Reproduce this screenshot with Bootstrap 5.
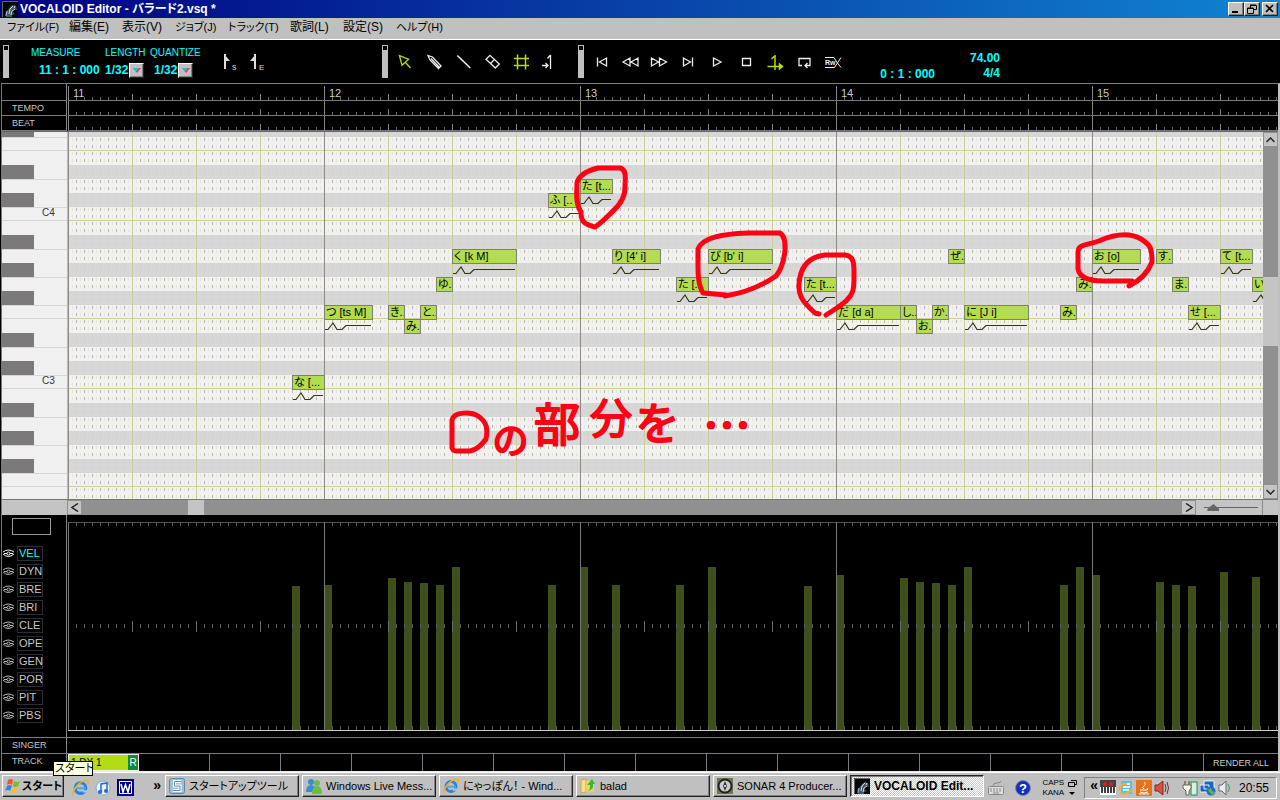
<!DOCTYPE html>
<html lang="ja">
<head>
<meta charset="utf-8">
<meta name="viewport" content="width=device-width, initial-scale=1">
<title>VOCALOID Editor - バラード2.vsq *</title>
<link href="https://cdn.jsdelivr.net/npm/bootstrap@5.3.0/dist/css/bootstrap.min.css" rel="stylesheet">
<style>
:root{--face:#c0c0c0;--cyan:#00ffff;--lime:#b4dc14;--rule:#777a80}
body{font-family:"Liberation Sans","Noto Sans CJK JP",sans-serif;font-size:12px;line-height:14px;background:#000;color:#000;font-feature-settings:"palt"}
button{font:inherit;color:inherit;border:0;background:none;padding:0;border-radius:0}
svg{display:block;flex:none}
.titlebar{height:18px;background:linear-gradient(90deg,#000080,#1084d0);color:#fff;font-weight:700;padding:0 2px;gap:2px}
.raised{background:var(--face);border:1px solid;border-color:#fff #222 #222 #fff;box-shadow:inset -1px -1px #808080}
.capbtn{width:16px;height:14px;display:flex;align-items:center;justify-content:center}
.capbtn.shut{margin-left:2px}
.menus{height:22px;background:var(--face);border-bottom:1px solid #fff;padding-left:7px}
.menus a{color:#000;text-decoration:none;line-height:18px;width:53px;flex:none}
.menus a.kana{font-size:11px}
.menus a.wide{width:62px}
.tools{height:43px;color:var(--cyan);padding-left:3px}
.grip{width:6px;height:33px;background:var(--face);flex:none;padding:1px}
.grip::before{content:"";display:block;width:4px;height:4px;background:#000}
.field-m{margin-left:22px;width:74px}
.field-l{width:45px}
.field-q{width:61px}
.flags{width:171px}
.toolset{padding:0 13px 0 3px}
.clock{padding-top:24px;width:74px}
.tempo{padding-top:9px;width:65px;line-height:15px}
.tool{width:29px;height:29px;color:#eee;flex:none}
.tool.lit{color:var(--lime)}
.tool svg,.flagbtn svg{fill:none;stroke:currentColor;stroke-width:1.3}
.flagbtn{width:28px;color:#ddd}
.tlabel{font-size:10px;line-height:16px}
.tval{font-weight:700;line-height:18px;height:18px}
.picker-box{position:relative;width:39px}
.picker{appearance:none;border:0;background:#000;color:var(--cyan);font-weight:700;font-size:12px;line-height:18px;padding:0;width:38px;height:18px;display:block}
.picker-mark{position:absolute;right:0;top:2px;width:15px;height:15px;pointer-events:none;display:flex;align-items:center;justify-content:center}
.work{margin-left:1px;border-left:1px solid #777;border-right:2px solid var(--face);border-top:1px solid #808080}
.side{width:65px;flex:none;border-right:1px solid #888;margin-right:1px;color:#c8c8c8;font-size:9px}
.side .cell{height:15px;line-height:14px;padding-left:10px;border-bottom:1px solid var(--rule)}
.side .cell.top{height:17px}
.canvas{flex:1 1 0;min-width:0;position:relative;overflow:hidden}
.canvas svg.fill-all{position:absolute;left:0;top:0;width:100%;height:100%}
.canvas svg.ink{z-index:2;pointer-events:none}
.roll{min-height:367px;background:#efefef;border-top:1px solid #666}
.roll .side{margin:0;width:66px;border-right:1px solid #bbb;position:relative}
.tone{position:absolute;height:15px;border:1px solid #7d806a;background:#b4dc50;line-height:13px;padding-left:1px;white-space:pre;overflow:hidden;font-size:11px}
.pitch{position:absolute;width:100%;height:30px;overflow:visible;pointer-events:none}
.sb{background:#909090;flex:none}
.sb button{background:#c4c4c4;border:1px solid #909090;width:15px;height:15px;display:flex;align-items:center;justify-content:center;flex:none}
.vbar{width:15px}
.vbar .gone{height:130px}.vbar .thumb{height:69px}
.hbar .gone{width:106px}.hbar .thumb{width:16px}
.thumb{background:#c4c4c4;flex:none}
.hbar{height:16px;background:#c4c4c4;border-top:1px solid #777;padding-left:65px}
.hbar .corner{width:16px;border-left:1px solid #888}
.zoomer{appearance:none;width:54px;height:15px;margin:0 4px 0 8px;background:linear-gradient(#666,#666) 0 7px/100% 1px no-repeat}
.zoomer::-webkit-slider-thumb{appearance:none;width:12px;height:7px;background:#666;clip-path:polygon(50% 0,100% 70%,100% 100%,0 100%,0 70%)}
.lane{height:223px;border-bottom:1px solid var(--rule)}
.parm{height:18px;gap:3px;font-size:11px;padding-left:1px}
.parm button{width:26px;height:15px;border:1px solid #2c2c34;text-align:left;line-height:13px;padding-left:1px}
.parm svg{color:#bbb;fill:none;stroke:currentColor}
.parm.on svg{color:#fff}.parm.on button{color:var(--cyan)}
.meter{width:39px;height:17px;border:1px solid #999;margin:3px 0 9px 10px}
.strip{height:16px;border-bottom:1px solid var(--rule)}
.tracks{height:17px;flex-wrap:nowrap}
.side .flat{line-height:15px;padding-left:10px}
.slot{flex:0 0 71px;border-right:1px solid var(--rule)}
.slot.used{background:var(--lime);border:1px solid #eee;color:#000;font-size:10px;line-height:15px;display:flex;justify-content:space-between;padding-left:2px}
.slot.used b{background:#128a3a;color:#fff;width:10px;text-align:center;font-weight:400}
.render{font-size:9px;color:#ccc;flex:1 0 0}
.taskbar{height:29px;background:var(--face);border-top:1px solid #e8e8e8;box-shadow:inset 0 1px #fff;padding:3px 3px 0 2px;position:relative}
.quick{width:101px;padding-left:8px;gap:6px;flex:none}
.chev{font-weight:700;font-size:14px;padding-bottom:6px}
.tasks{gap:3px;flex:0 1 819px;min-width:0}
.task{height:22px;flex:1 1 0;min-width:0;font-size:11px;padding:0 2px 0 3px;display:flex;align-items:center;gap:4px;white-space:nowrap;overflow:hidden}
.task.now{border-color:#222 #fff #fff #222;box-shadow:inset 1px 1px #808080;background:repeating-conic-gradient(#fff 0 25%,#c8c8c8 0 50%) 0 0/2px 2px;font-weight:700;font-size:12px}
.start{width:62px;height:22px;font-weight:700;font-size:11px;display:flex;align-items:center;gap:1px;padding-left:1px;white-space:nowrap;flex:none}
.status{gap:11px}
.tray{border:1px solid;border-color:#808080 #fff #fff #808080;height:22px;padding:0 7px 0 5px;gap:2px}
.power{margin-left:10px}
.tray time{margin-left:5px;font-size:12px}
.tip{position:absolute;left:53px;top:-11px;background:#ffffe1;border:1px solid #000;font-size:11px;line-height:13px;padding:0 1px;height:15px;z-index:3;width:40px;white-space:nowrap}
.ime{font-size:8px;line-height:10px;gap:4px;margin-right:-4px}
</style>
</head>
<body class="d-flex flex-column min-vh-100">
<svg width="0" height="0" class="position-absolute" aria-hidden="true">
 <defs>
  <symbol id="face" viewBox="0 0 16 16"><path fill="#050808" d="M0 0h16v16H0z"/><path fill="none" stroke="#666" d="M.5 16V.5H16"/><path d="M4 16l1-6 3-4 3-2 3 1 1 4-3-1-2 3 3 2-3 1v2z" fill="#456"/><path d="M7 13l1-5 3-3M9 14l1-4 3-2M4 15l1-5M12 7l1-2" stroke="#cde" fill="none"/><path d="M3 15l1-4 1 4" fill="#678"/></symbol>
  <symbol id="ie" viewBox="0 0 16 16"><circle cx="8" cy="8.5" r="5" fill="none" stroke="#2a84dc" stroke-width="3"/><path d="M4 8.700h9" stroke="#49a6f0" stroke-width="2"/><path d="M10 10.500h5v2.200h-5z" fill="#c0c0c0"/><path d="M1.500 15C-1 12 7 2 13 1.200c3-.3 2.500 2 1.500 4" fill="none" stroke="#f2b418" stroke-width="1.500"/></symbol>
 </defs>
</svg>

<header class="titlebar d-flex align-items-center">
 <svg width="16" height="16"><use href="#face"/></svg>
 <span class="flex-grow-1 text-nowrap">VOCALOID Editor - バラード2.vsq *</span>
 <div class="d-flex">
  <button class="raised capbtn" aria-label="最小化"><svg width="10" height="10"><path d="M1 8h6" stroke="#000" stroke-width="2"/></svg></button>
  <button class="raised capbtn" aria-label="元に戻す"><svg width="10" height="10" fill="none" stroke="#000"><path d="M3 1h6M3 1.500h6.500v4H7M3.500 1v3M.5 4v5.500h6V4zM0 4.500h7"/></svg></button>
  <button class="raised capbtn shut" aria-label="閉じる"><svg width="10" height="10"><path d="M1 1l7 7M8 1l-7 7" stroke="#000" stroke-width="1.700"/></svg></button>
 </div>
</header>

<nav class="menus d-flex text-nowrap">
 <a href="#" class="kana wide">ファイル(F)</a><a href="#">編集(E)</a><a href="#">表示(V)</a><a href="#" class="kana">ジョブ(J)</a><a href="#" class="kana wide">トラック(T)</a><a href="#">歌詞(L)</a><a href="#">設定(S)</a><a href="#" class="kana">ヘルプ(H)</a>
</nav>

<section class="tools d-flex align-items-center text-nowrap" aria-label="ツールバー">
 <div class="grip"></div>
 <div class="field-m"><div class="tlabel">MEASURE</div><div class="tval ps-2">11 : 1 : 000</div></div>
 <div class="field-l"><label class="tlabel d-block" for="len">LENGTH</label><div class="picker-box"><select id="len" class="picker"><option>1/32</option></select><span class="raised picker-mark"><svg width="8" height="5"><path d="M0 0h8L4 5z" fill="#f33"/><path d="M0 0h6L3 4z" fill="#2bd"/></svg></span></div></div>
 <div class="field-q"><label class="tlabel d-block" for="qua">QUANTIZE</label><div class="picker-box ms-1"><select id="qua" class="picker"><option>1/32</option></select><span class="raised picker-mark"><svg width="8" height="5"><path d="M0 0h8L4 5z" fill="#f33"/><path d="M0 0h6L3 4z" fill="#2bd"/></svg></span></div></div>
 <div class="flags d-flex ps-1">
  <button class="flagbtn" aria-label="開始マーカー"><svg width="28" height="29"><path d="M10 7v15" stroke-width="2"/><path d="M9 7l6 7H9z" fill="currentColor" stroke="none"/><text x="17" y="23" font-size="9" fill="currentColor" stroke="none">s</text></svg></button>
  <button class="flagbtn" aria-label="終了マーカー"><svg width="28" height="29"><path d="M12 7v15" stroke-width="2"/><path d="M13 7l-6 7h6z" fill="currentColor" stroke="none"/><text x="16" y="23" font-size="8" fill="currentColor" stroke="none">E</text></svg></button>
 </div>
 <div class="grip"></div>
 <div class="toolset d-flex">
  <button class="tool lit" aria-label="矢印"><svg width="29" height="29"><path d="M8.500 8.700l9 3.500-6.500 6zM14 15l5.500 6"/></svg></button>
  <button class="tool" aria-label="鉛筆"><svg width="29" height="29"><path d="M8 8.500l4.500 1.500 8.500 9-2.500 2.500L10 13zM11 11.500l8 8.500"/></svg></button>
  <button class="tool" aria-label="直線"><svg width="29" height="29"><path stroke-width="1.600" d="M8.300 8.500l13 12.500"/></svg></button>
  <button class="tool" aria-label="消しゴム"><svg width="29" height="29"><path d="M8 12.300l4-4 9.300 8.700-4 4zM12.500 16.500l4-4"/></svg></button>
  <button class="tool lit" aria-label="グリッド"><svg width="29" height="29"><path stroke-width="1.500" d="M10.500 7.500v15M18.500 7.500v15M7 11.500h15M7 18.500h15"/></svg></button>
  <button class="tool" aria-label="終端"><svg width="29" height="29"><path d="M14.500 8v14M14.500 8l-3 3.500M6 18.500h6M9.500 16l2.500 2.500-2.500 2.500"/></svg></button>
 </div>
 <div class="grip"></div>
 <div class="toolset d-flex">
  <button class="tool" aria-label="先頭へ"><svg width="29" height="29"><path d="M10.500 10.500v9M19.500 11v8l-7-4z"/></svg></button>
  <button class="tool" aria-label="巻き戻し"><svg width="29" height="29"><path d="M14 11v8l-7-4zM22 11v8l-7-4z"/></svg></button>
  <button class="tool" aria-label="早送り"><svg width="29" height="29"><path d="M6.500 11v8l7-4zM14.500 11v8l7-4z"/></svg></button>
  <button class="tool" aria-label="末尾へ"><svg width="29" height="29"><path d="M9.500 11v8l7-4zM18.500 10.500v9"/></svg></button>
  <button class="tool" aria-label="再生"><svg width="29" height="29"><path d="M10.500 11v8l7.500-4z"/></svg></button>
  <button class="tool" aria-label="停止"><svg width="29" height="29"><path d="M10.500 11.500h8v7h-8z"/></svg></button>
  <button class="tool lit" aria-label="開始位置"><svg width="29" height="29"><path stroke-width="1.500" d="M14 8v15M14 8.500L10.500 12M6.500 19.500h14M18.500 17l3 2.500-3 2.500z"/></svg></button>
  <button class="tool" aria-label="ループ"><svg width="29" height="29"><path d="M12 18.500H9v-7h11v7h-5M17.500 16L15 18.500l2.500 2.500"/></svg></button>
  <button class="tool" aria-label="RwX"><svg width="29" height="29"><path stroke-width="1" d="M6 10.500h9l3 5 4 5M22 10.500l-6.500 10H6"/><text x="6" y="18" font-size="7" font-weight="700" fill="currentColor" stroke="none">Rw</text></svg></button>
 </div>
 <div class="clock text-end fw-bold">0 : 1 : 000</div>
 <div class="tempo text-end fw-bold">74.00<br>4/4</div>
</section>

<main class="work d-flex flex-column flex-grow-1">
 <div class="d-flex">
  <div class="side"><div class="cell top"></div><div class="cell">TEMPO</div><div class="cell">BEAT</div></div>
  <div class="canvas">
   <svg class="fill-all">
    <defs>
     <pattern id="t8" width="8" height="4" patternUnits="userSpaceOnUse"><path d="M.5 0v4" stroke="#666"/></pattern>
     <pattern id="t64" width="64" height="60" patternUnits="userSpaceOnUse"><path d="M.5 10v6M.5 25v6M.5 40v6" stroke="#888"/></pattern>
     <pattern id="t256" width="256" height="60" patternUnits="userSpaceOnUse"><path d="M.5 2v46" stroke="#888"/></pattern>
    </defs>
    <rect y="13" width="100%" height="3" fill="url(#t8)"/><rect y="28" width="100%" height="3" fill="url(#t8)"/><rect y="43" width="100%" height="3" fill="url(#t8)"/>
    <rect width="100%" height="47" fill="url(#t64)"/><rect width="100%" height="47" fill="url(#t256)"/>
    <path d="M0 16.500h4000M0 31.500h4000M0 46.500h4000" stroke="#777a80"/>
    <g fill="#ccc" font-size="11"><text x="5" y="13">11</text><text x="261" y="13">12</text><text x="517" y="13">13</text><text x="773" y="13">14</text><text x="1029" y="13">15</text></g>
   </svg>
  </div>
 </div>

 <div class="roll d-flex flex-grow-1">
  <div class="side">
   <svg width="65" height="100%" class="position-absolute">
    <defs><pattern id="keys" y="75" width="65" height="168" patternUnits="userSpaceOnUse">
     <rect width="65" height="168" fill="#f0f0f1"/>
     <path d="M0 .5h65M0 13.500h65M0 42.500h65M0 70.500h65M0 98.500h65M0 111.500h65M0 140.500h65" stroke="#d6d6d6"/>
     <path d="M0 28h32v14H0zM0 56h32v14H0zM0 84h32v14H0zM0 126h32v14H0zM0 154h32v14H0z" fill="#7b797a"/></pattern></defs>
    <rect width="65" height="100%" fill="url(#keys)"/>
    <g fill="#334" font-size="10"><text x="40" y="84">C4</text><text x="40" y="252">C3</text></g>
   </svg>
  </div>
  <div class="canvas" id="notes">
   <svg class="fill-all">
    <defs>
     <pattern id="dash" y="5" width="8" height="7" patternUnits="userSpaceOnUse"><path d="M.5 1v3" stroke="#b9b9a4"/><path d="M4.500 1v3" stroke="#e6e6de"/></pattern>
     <pattern id="rows" y="75" width="8" height="168" patternUnits="userSpaceOnUse">
      <path d="M0 28h8v14H0zM0 56h8v14H0zM0 84h8v14H0zM0 126h8v14H0zM0 154h8v14H0z" fill="#d2d2d2" fill-opacity=".86"/>
      <path d="M0 13.500h8M0 111.500h8" stroke="#cfcf9c"/></pattern>
     <pattern id="beat" width="64" height="64" patternUnits="userSpaceOnUse"><path d="M.5 0v64" stroke="#cccc98"/></pattern>
     <pattern id="bar" width="256" height="64" patternUnits="userSpaceOnUse"><path d="M.5 0v64" stroke="#8f8980"/></pattern>
    </defs>
    <rect width="100%" height="100%" fill="#f1f1f1"/><rect width="100%" height="100%" fill="url(#dash)"/><rect width="100%" height="100%" fill="url(#rows)"/><rect width="100%" height="100%" fill="url(#beat)"/><rect width="100%" height="100%" fill="url(#bar)"/>
   </svg>
   <svg class="fill-all ink" id="ink" fill="none" stroke="#ff0014" stroke-width="5" stroke-linecap="round" stroke-linejoin="round">
    <path d="M513 80C507 72 509 58 509 51C511 42 522 38 530 36H552C557 37 558 42 557 53C558 65 552 73 544 80C538 86 531 93 527 95C520 93 513 92 513 81"/>
    <path d="M658 163L635 161C629 151 630 137 630 117C635 105 655 102 680 101H712C717 104 717 111 717 118C716 129 713 138 708 144C695 153 676 161 657 164"/>
    <path d="M751 182L747 181C737 172 730 165 731 152C732 137 739 125 757 123H777C787 124 786 134 786 145C786 158 785 162 779 168C773 174 764 179 758 183"/>
    <path d="M1061 154C1069 150 1079 143 1084 130C1084 117 1083 113 1073 107C1061 100 1045 103 1031 109C1020 113 1010 112 1010 120V137C1012 147 1025 149 1035 149H1064"/>
    <path d="M384 316V288C386 279 404 280 410 284C419 290 420 297 418 307C413 314 408 318 402 319H389C385 319 384 318 384 314"/>
    <g fill="#ff0014" stroke-width="2" font-family="Noto Sans CJK JP, sans-serif" font-weight="400"><text x="425" y="322" font-size="36">の</text><text x="466" y="309" font-size="46">部</text><text x="522" y="302" font-size="42">分</text><text x="568" y="308" font-size="44">を</text><text x="635" y="311" font-size="48">…</text></g>
   </svg>
  </div>
  <div class="sb vbar d-flex flex-column">
   <button aria-label="上へ"><svg width="9" height="6"><path d="M.5 5l4-4 4 4" fill="none" stroke="#222" stroke-width="1.500"/></svg></button>
   <div class="gone"></div><div class="thumb"></div>
   <button class="mt-auto" aria-label="下へ"><svg width="9" height="6"><path d="M.5 1l4 4 4-4" fill="none" stroke="#222" stroke-width="1.500"/></svg></button>
  </div>
 </div>

 <div class="hbar d-flex">
  <div class="sb d-flex flex-grow-1 overflow-hidden">
   <button aria-label="左へ"><svg width="8" height="9"><path d="M7 .5l-6 4 6 4" fill="none" stroke="#222" stroke-width="1.500"/></svg></button>
   <div class="gone"></div><div class="thumb"></div>
   <button class="ms-auto" aria-label="右へ"><svg width="8" height="9"><path d="M1 .5l6 4-6 4" fill="none" stroke="#222" stroke-width="1.500"/></svg></button>
  </div>
  <input type="range" class="zoomer" min="0" max="100" value="8" aria-label="ズーム">
  <div class="corner"></div>
 </div>

 <div class="lane d-flex">
  <div class="side"><div class="meter"></div><div id="parms"></div></div>
  <div class="canvas"><svg class="fill-all">
   <defs>
    <pattern id="v8" width="8" height="4" patternUnits="userSpaceOnUse"><path d="M.5 0v4" stroke="#5c5c5c"/></pattern>
    <pattern id="v64" y="106" width="64" height="11" patternUnits="userSpaceOnUse"><path d="M.5 0v11" stroke="#6c6c6c"/></pattern>
    <pattern id="v256" width="256" height="64" patternUnits="userSpaceOnUse"><path d="M.5 0v64" stroke="#777"/></pattern>
   </defs>
   <g id="bars" fill="#3f4f1c"></g>
   <path d="M0 7.500h4000" stroke="#555"/>
   <rect y="8" width="100%" height="3" fill="url(#v8)"/><rect y="109" width="100%" height="4" fill="url(#v8)"/><rect y="211" width="100%" height="4" fill="url(#v8)"/><rect y="106" width="100%" height="11" fill="url(#v64)"/><rect y="7" width="100%" height="208" fill="url(#v256)"/>
   <path d="M0 215.500h4000" stroke="#ccc"/>
  </svg></div>
 </div>
 <div class="strip d-flex"><div class="side"><div class="flat">SINGER</div></div></div>
 <div class="tracks d-flex overflow-hidden" id="tracks"><div class="side"><div class="flat">TRACK</div></div>
  <div class="slot used"><span>1 DX 1</span><b>R</b></div>
 </div>
</main>

<footer class="taskbar d-flex">
 <div class="tip" role="tooltip">スタート</div>
 <button class="raised start"><svg width="17" height="16"><path d="M4 2q3-2 5 0L8 7Q5 5 3 7z" fill="#e8582c"/><path d="M10 3q3 2 6 0l-2 5q-3 2-5 0z" fill="#7cb82f"/><path d="M3 8q3-2 5 0l-2 5Q4 11 1 13z" fill="#3a82e0"/><path d="M9 9q2 2 5 0l-2 5q-3 2-5 0z" fill="#f8c020"/></svg>スタート</button>
 <div class="quick d-flex align-items-center">
  <svg width="17" height="17"><use href="#ie"/></svg>
  <svg width="16" height="16"><circle cx="8" cy="8" r="7" fill="#e8f2fa" stroke="#8ac"/><path d="M2 11a7 7 0 005 4l1-6z" fill="#b8e0a0"/><path d="M6 12V4l6-1v8" fill="none" stroke="#2a6ad0" stroke-width="1.500"/><circle cx="5" cy="12" r="2" fill="#2a6ad0"/><circle cx="11" cy="11" r="2" fill="#2a6ad0"/></svg>
  <svg width="17" height="17"><path d="M0 0h17v17H0z" fill="#00008b"/><path d="M2.500 2.500h12v12h-12z" fill="none" stroke="#fff"/><path d="M4 5l2 8 2.500-7L11 13l2-8" fill="none" stroke="#fff" stroke-width="1.600"/></svg>
  <span class="chev ms-auto pe-1">»</span>
 </div>
 <div class="tasks d-flex">
  <button class="raised task"><svg width="16" height="16"><rect x=".5" y=".5" width="15" height="15" rx="2" fill="#9fc0dc" stroke="#5686ac"/><path d="M12 3.500H5.500V8H11v4.500H4" fill="none" stroke="#fff" stroke-width="3"/><path d="M12 3.500H5.500V8H11v4.500H4" fill="none" stroke="#5e8cb0"/></svg>スタートアップツール</button>
  <button class="raised task"><svg width="16" height="16"><circle cx="5" cy="4" r="3" fill="#3a8ed0"/><path d="M0 14q0-7 5-7t5 7z" fill="#3a8ed0"/><circle cx="11" cy="5" r="3" fill="#6cbb4c"/><path d="M6 16q0-8 5-8t5 8z" fill="#6cbb4c"/></svg>Windows Live Mess...</button>
  <button class="raised task"><svg width="16" height="16"><use href="#ie"/></svg>にゃっぽん！ - Wind...</button>
  <button class="raised task"><svg width="16" height="16"><path d="M1 2l5-1v13l-5 1z" fill="#f8e088" stroke="#c8a840"/><path d="M6 3h8v11H6z" fill="#f0d060"/><path d="M7 13q4-1 3-6H7l5-6 3 5h-2q1 6-6 7" fill="#38b838"/></svg>balad</button>
  <button class="raised task"><svg width="16" height="16"><path d="M0 0h16v16H0z" fill="#6c7850"/><circle cx="8" cy="8" r="6.500" fill="#ccc" stroke="#222" stroke-width="2"/><path d="M8 3l2 5-2 5-2-5z" fill="#333"/><circle cx="8" cy="8" r="1" fill="#fff"/></svg>SONAR 4 Producer...</button>
  <button class="raised task now"><svg width="16" height="16"><use href="#face"/></svg>VOCALOID Edit...</button>
 </div>
 <div class="status d-flex align-items-center ms-auto text-nowrap">
  <svg width="16" height="15" fill="none" stroke="#888"><rect x=".5" y="6.500" width="15" height="8" rx="1" fill="#ddd"/><path d="M2 9h12M2 11h12" stroke-dasharray="2 1"/><path d="M5 13h6M5 6q0-3 4-3t4-2"/></svg>
  <svg width="16" height="16"><circle cx="8" cy="8" r="7.500" fill="#1530c0" stroke="#889"/><text x="4" y="13" font-size="13" font-weight="700" fill="#fff">?</text></svg>
  <div class="ime d-flex"><div>CAPS<br>KANA</div><svg width="9" height="20" fill="none" stroke="#000"><path d="M3 2.500h5.500v4H7M.5 4.500h6v4h-6z"/><path d="M1 14h6l-3 3z" fill="#000" stroke="none"/></svg></div>
  <div class="tray d-flex align-items-center"><span class="chev">«</span>
   <svg width="16" height="16"><path d="M0 0h16v7H0z" fill="#444"/><circle cx="5" cy="4" r="2" fill="#e02020"/><circle cx="11" cy="4" r="2" fill="#e02020"/><path d="M0 7h16v8H0z" fill="#fff"/><path d="M2 7v6M5 7v6M8 7v6M11 7v6M14 7v6" stroke="#000" stroke-width="1.500"/></svg>
   <svg width="16" height="16"><rect x="3" y="1" width="11" height="13" fill="#5cc0e0"/><path d="M5 4h7M5 7h7M5 10h6" stroke="#fff" stroke-width="1.500"/><path d="M1 10q1-7 8-6M2 13q7 3 12-4" fill="none" stroke="#f0b040" stroke-width="2"/></svg>
   <svg width="16" height="16"><rect width="16" height="16" rx="1" fill="#e87018"/><path d="M8 2q3 2 0 4t0 3M4 10h7q2-2 0-1M4 12q4 2 8 0M3 14h10" fill="none" stroke="#fff"/></svg>
   <svg width="16" height="16"><path d="M1 5h3l5-4v14l-5-4H1z" fill="#d85040" stroke="#822"/><path d="M11 4q2 4 0 8M13 2q3 6 0 12" fill="none" stroke="#633"/></svg>
   <svg width="16" height="16" class="power"><rect x="9" y="2" width="6" height="13" fill="#d8f0e0" stroke="#286"/><path d="M1 5h8v3l-2 3v4H4v-4L1 8z" fill="#fff" stroke="#664"/><path d="M3 5V1M7 5V1" stroke="#864" stroke-width="1.500"/></svg>
   <svg width="16" height="16"><path d="M4 1h10v8H4zM0 5h9v7H0z" fill="#1868b8" stroke="#eef"/><circle cx="11" cy="11" r="4.500" fill="#2864d8"/><path d="M8 10l3-2 1 3 3 1-2 3-3-2z" fill="#50c040"/></svg>
   <svg width="14" height="16"><path d="M1 5h3l4-4v14l-4-4H1z" fill="#e8eef0" stroke="#667"/><path d="M10 4q3 4 0 8" fill="none" stroke="#2a6"/></svg>
   <time>20:55</time>
  </div>
 </div>
</footer>

<script src="https://cdn.jsdelivr.net/npm/bootstrap@5.3.0/dist/js/bootstrap.bundle.min.js"></script>
<script>
// start (1/32 steps from measure 11), row below the top D, length in steps, lyric
const song = [
 [28,14,4,'な [...'],[32,9,6,'つ [ts M]'],[40,9,2,'き..'],[42,10,2,'み.'],[44,9,2,'と..'],[46,7,2,'ゆ.'],[48,5,8,'く [k M]'],
 [60,1,4,'ふ [..'],[64,0,4,'た [t...'],[68,5,6,"り [4' i]"],[76,7,4,'た [...'],[80,5,8,"び [b' i]"],[92,7,4,'た [t...'],
 [96,9,8,'だ [d a]'],[104,9,2,'し..'],[106,10,2,'お.'],[108,9,2,'か.'],[110,5,2,'ぜ.'],[112,9,8,'に [J i]'],[124,9,2,'み.'],
 [126,7,2,'み.'],[128,5,6,'お [o]'],[136,5,2,'す.'],[138,7,2,'ま.'],[140,9,4,'せ [...'],[144,5,4,'て [t...'],[148,7,4,'い']
];
const velocity = [144,145,152,148,147,145,163,145,163,145,145,163,144,155,152,148,147,145,163,145,163,155,148,145,144,158,153];
const ink = document.getElementById('ink');
let bars = '';
song.forEach(([start, row, len, lyric], i) => {
  const x = start * 8, y = 47 + row * 14, w = len * 8;
  if (len > 2) {
    ink.insertAdjacentHTML('beforebegin', `<svg class="pitch" style="left:${x}px;top:${y}px"><path d="M1 24.500H4L9 18L13 24.500H18L22 20.500H${w - 1}" fill="none" stroke="#333310" stroke-width="1.200"/></svg>`);
  }
  ink.insertAdjacentHTML('beforebegin', `<div class="tone" style="left:${x}px;top:${y}px;width:${w + 1}px">${lyric}</div>`);
  bars += `<rect x="${x}" y="${215 - velocity[i]}" width="8" height="${velocity[i]}"/>`;
});
document.getElementById('bars').innerHTML = bars;
document.getElementById('parms').innerHTML = ['VEL','DYN','BRE','BRI','CLE','OPE','GEN','POR','PIT','PBS'].map((p, i) =>
  `<div class="parm d-flex align-items-center ${i ? '' : 'on'}"><svg width="11" height="9"><path d="M0 3Q5 -1 11 3M0 5Q5 10 11 5M1 4.500h3M7 4.500h3"/><circle cx="5.500" cy="4.500" r="1.500"/></svg><button>${p}</button></div>`).join('');
document.getElementById('tracks').insertAdjacentHTML('beforeend', '<div class="slot"></div>'.repeat(15) + '<button class="render">RENDER ALL</button>');
</script>
</body>
</html>
